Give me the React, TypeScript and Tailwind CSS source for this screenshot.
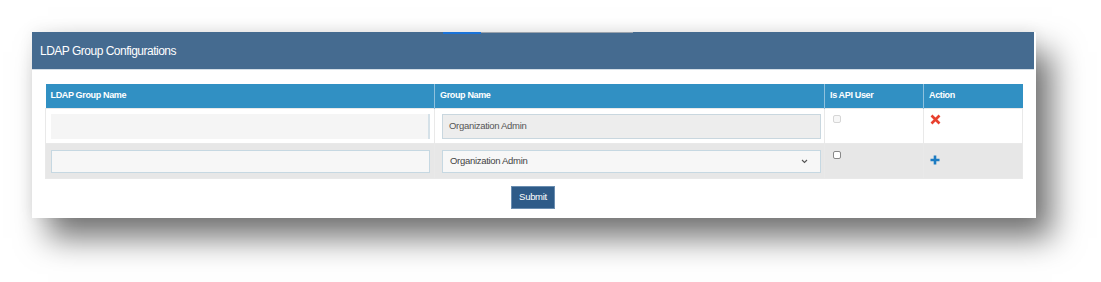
import React from 'react';

function Cross() {
  return (
    <svg width="11" height="11" viewBox="0 0 11 11">
      <path d="M1.5 1.5 L9.5 9.5 M9.5 1.5 L1.5 9.5" stroke="#e8412f" strokeWidth="2.6" strokeLinecap="butt" />
    </svg>
  );
}

function Plus() {
  return (
    <svg width="10" height="10" viewBox="0 0 10 10">
      <path d="M5 0.5 V9.5 M0.5 5 H9.5" stroke="#1d7cc2" strokeWidth="2.6" />
    </svg>
  );
}

export default function App() {
  return (
    <div className="w-[1101px] h-[282px] bg-white overflow-hidden font-['Liberation_Sans',Arial,sans-serif]">
      <div className="pt-[32px] pl-[32px]">
        <div className="w-[1004px] bg-white shadow-[16px_20px_30px_rgba(0,0,0,0.55),0_-2px_14px_rgba(0,0,0,0.06)]">
          {/* header band */}
          <div className="relative h-[38px] bg-[#456b90] border-b border-[#d3dde6] flex items-center pl-[8px] mr-[2px]">
            <div className="absolute top-0 left-[411px] w-[38px] h-[2px] bg-[#1a73d9]" />
            <div className="absolute top-0 left-[449px] w-[152px] h-[1px] bg-[#9aa3ad]" />
            <span className="text-white text-[12px] tracking-[-0.5px]">LDAP Group Configurations</span>
          </div>

          <div className="px-[13px] pt-[14px] pb-[9px]">
            <table className="w-[977px] border-collapse table-fixed">
              <colgroup>
                <col className="w-[389px]" />
                <col className="w-[390px]" />
                <col className="w-[99px]" />
                <col className="w-[99px]" />
              </colgroup>
              <thead>
                <tr className="h-[24px] bg-[#3190c3] text-white text-[9px] font-bold text-left">
                  <th className="pl-[5px] border-r border-[#8fc1dd] tracking-[-0.35px]">LDAP Group Name</th>
                  <th className="pl-[5px] border-r border-[#8fc1dd] tracking-[-0.35px]">Group Name</th>
                  <th className="pl-[5px] border-r border-[#8fc1dd] tracking-[-0.35px]">Is API User</th>
                  <th className="pl-[5px] tracking-[-0.35px]">Action</th>
                </tr>
              </thead>
              <tbody>
                <tr className="h-[35px] bg-white align-top">
                  <td className="pt-[5px] pl-[5px] pr-[4px] border border-[#e9e9e9]">
                    <div className="h-[25px] bg-[#f5f5f5] border-r-2 border-[#d5e1e8]" />
                  </td>
                  <td className="pt-[5px] pl-[7px] pr-[3px] border border-[#e9e9e9]">
                    <div className="h-[25px] bg-[#ededed] border border-[#c9d7df] flex items-center pl-[6px] text-[9.5px] text-[#555] tracking-[-0.3px]">
                      Organization Admin
                    </div>
                  </td>
                  <td className="pt-[6px] pl-[8px] border border-[#e9e9e9]">
                    <div className="w-[8px] h-[8px] rounded-[2px] border border-[#d6d6d6] bg-[#f7f7f7]" />
                  </td>
                  <td className="pt-[5px] pl-[6px] border border-[#e9e9e9]">
                    <Cross />
                  </td>
                </tr>
                <tr className="h-[35px] bg-[#e7e7e7] align-top">
                  <td className="pt-[6px] pl-[5px] pr-[4px] border border-[#e9e9e9]">
                    <div className="h-[23px] bg-[#f7f7f7] border border-[#c6d8e2]" />
                  </td>
                  <td className="pt-[6px] pl-[7px] pr-[3px] border border-[#e9e9e9]">
                    <div className="h-[23px] bg-[#f7f7f7] border border-[#c6d8e2] flex items-center justify-between pl-[7px] pr-[12px] text-[9.5px] text-[#444] tracking-[-0.3px]">
                      <span>Organization Admin</span>
                      <svg width="7" height="5" viewBox="0 0 7 5">
                        <path d="M1 1 L3.5 3.5 L6 1" fill="none" stroke="#555" strokeWidth="1.1" />
                      </svg>
                    </div>
                  </td>
                  <td className="pt-[7px] pl-[8px] border border-[#e9e9e9]">
                    <div className="w-[8px] h-[8px] rounded-[2px] border border-[#888] bg-white" />
                  </td>
                  <td className="pt-[11px] pl-[6px] border border-[#e9e9e9]">
                    <Plus />
                  </td>
                </tr>
              </tbody>
            </table>
            <div className="flex justify-center mt-[7px] pr-[2px]">
              <button className="h-[23px] px-[7px] bg-[#2e5b88] border border-[#6a8db0] text-white text-[9.5px] tracking-[-0.3px]">
                Submit
              </button>
            </div>
          </div>
        </div>
      </div>
    </div>
  );
}
